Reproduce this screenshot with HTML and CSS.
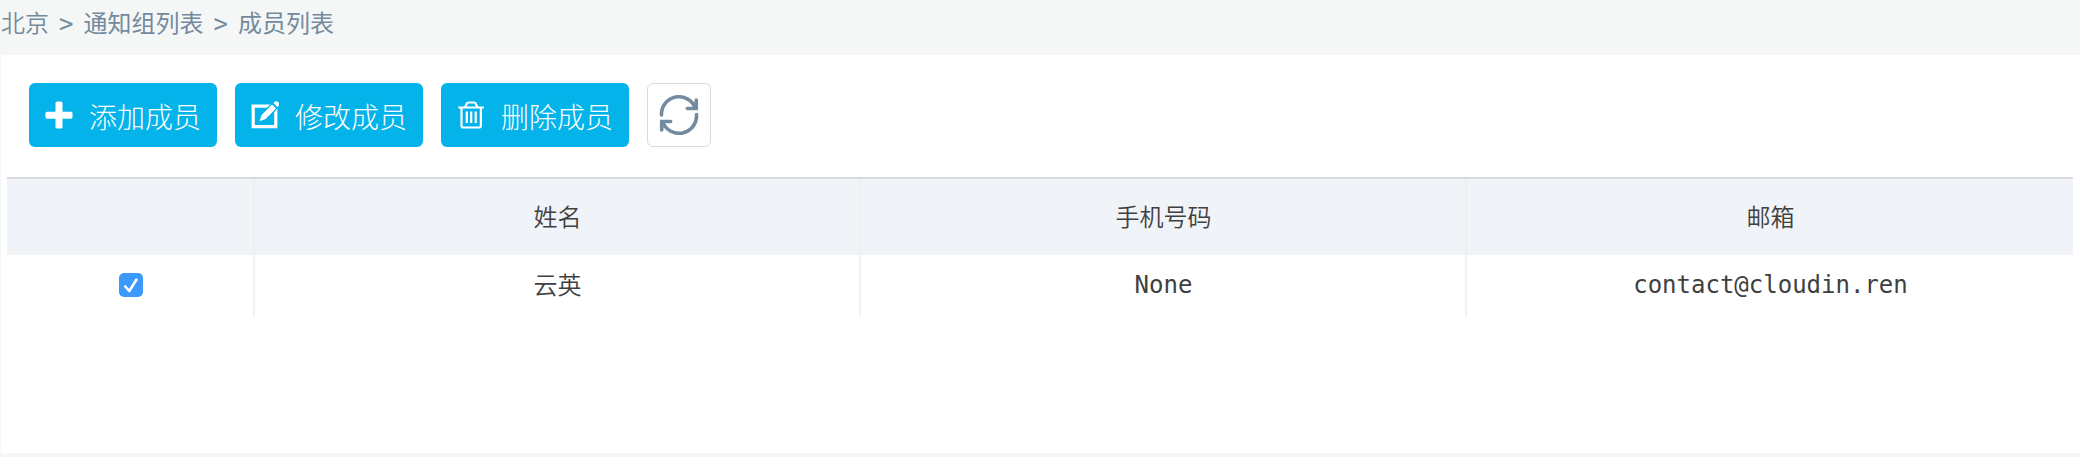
FILE: index.html
```html
<!DOCTYPE html>
<html lang="zh-CN">
<head>
<meta charset="utf-8">
<title>成员列表</title>
<link rel="stylesheet" href="styles.css">
</head>
<body>
<nav class="breadcrumb">
  <span class="crumb-root">北京</span>
  <span class="crumb-sep">&gt;</span>
  <span class="crumb">通知组列表</span>
  <span class="crumb-sep">&gt;</span>
  <span class="crumb">成员列表</span>
</nav>
<main class="panel">
  <div class="toolbar">
    <button class="btn">
      <svg class="icon" viewBox="0 0 28 28" fill="currentColor"><rect x="10.500" y="0.500" width="7" height="27" rx="1.600"/><rect x="0.500" y="10.700" width="27" height="7" rx="1.600"/></svg>
      <span class="label">添加成员</span>
    </button>
    <button class="btn">
      <svg class="icon" viewBox="0 0 28 28"><path d="M2.200 5.200h22.600v20.400H2.200z" fill="none" stroke="currentColor" stroke-width="3.200"/><g class="pencil"><path d="M8.600 20.200l2-6.300L21 3.500l4 4L14.600 18z"/><path d="M22.400 2.100l.9-.9a2.800 2.800 0 0 1 4 4l-.9.900z"/></g></svg>
      <span class="label">修改成员</span>
    </button>
    <button class="btn">
      <svg class="icon" viewBox="0 0 28 28" fill="none" stroke="currentColor" stroke-width="2.200"><path d="M1.300 6.500h25.500M8 6.500l1.700-3.800q.5-1.200 1.700-1.200h5.700q1.200 0 1.700 1.200l1.700 3.800M4.500 6.500v18q0 2 2 2h15.400q2 0 2-2v-18M9.800 10.500v11.500M14.200 10.500v11.500M18.700 10.500v11.500"/></svg>
      <span class="label">删除成员</span>
    </button>
    <button class="btn-refresh" aria-label="refresh">
      <svg class="icon-refresh" viewBox="0 0 40 40" fill="none" stroke="currentColor" stroke-width="3.600" stroke-linecap="round" stroke-linejoin="miter"><path d="M2.500 20A17.500 17.500 0 0 1 36.500 13.500M37.300 5v8.500h-9"/><path d="M37.500 19.500A17.500 17.500 0 0 1 3.500 26.500M2.700 35v-8.500h9"/></svg>
    </button>
  </div>
  <table class="members">
    <colgroup><col class="col-check"><col class="col-data"><col class="col-data"><col class="col-last"></colgroup>
    <thead>
      <tr><th></th><th>姓名</th><th>手机号码</th><th>邮箱</th></tr>
    </thead>
    <tbody>
      <tr>
        <td><span class="checkbox"><svg viewBox="0 0 24 24" fill="none" stroke="currentColor" stroke-width="2.600" stroke-linecap="round" stroke-linejoin="round"><path d="M6.300 13.500l4 4.500 7.200-11.500"/></svg></span></td>
        <td class="name">云英</td>
        <td class="latin">None</td>
        <td class="latin">contact@cloudin.ren</td>
      </tr>
    </tbody>
  </table>
</main>
</body>
</html>
```

FILE: styles.css
```css
* {
  box-sizing: border-box;
}

body {
  margin: 0;
  height: 457px;
  padding: 0 0 4px 1px;
  display: flex;
  flex-direction: column;
  background: #f5f7f7;
  color: #404040;
  font: 350 24px/32px "Noto Sans CJK SC", sans-serif;
}

.breadcrumb {
  display: flex;
  height: 55px;
  padding-top: 6px;
  color: #748a9f;
  white-space: nowrap;
}

.crumb-sep {
  width: 14px;
  padding-top: 2px;
  margin: 0 10.500px 0 10px;
  font-family: "DejaVu Sans Mono", monospace;
}

.crumb {
  font-weight: 400;
}

.panel {
  flex: 1;
  padding: 28px 6px 0;
  background: #fff;
}

.toolbar {
  display: flex;
  gap: 18px;
  padding-left: 22px;
  margin-bottom: 30px;
}

.btn {
  display: flex;
  align-items: center;
  width: 188px;
  height: 64px;
  padding: 0 0 0 16px;
  border: 0;
  border-radius: 6px;
  background: #05b3eb;
  color: #fff;
  font: 300 28px/40px "Noto Sans CJK SC", sans-serif;
}

.icon {
  width: 28px;
  height: 28px;
  flex: none;
}

.pencil {
  fill: currentColor;
  stroke: #05b3eb;
  stroke-width: 2.400;
  paint-order: stroke;
}

.label {
  padding-top: 1px;
  margin-left: 16px;
  white-space: nowrap;
}

.btn-refresh {
  display: flex;
  align-items: center;
  justify-content: center;
  width: 64px;
  height: 64px;
  padding: 0;
  border: 1px solid #d9dadc;
  border-radius: 6px;
  background: #fff;
  color: #748a9f;
}

.icon-refresh {
  width: 40px;
  height: 40px;
}

.members {
  width: 2066px;
  table-layout: fixed;
  border-collapse: separate;
  border-spacing: 0;
  border-top: 2px solid #d9dadc;
  text-align: center;
}

.col-check {
  width: 248px;
}

.col-data,
.col-last {
  width: 606px;
}

.members th,
.members td {
  padding: 0 0 0 1px;
  border-right: 2px solid #f2f2f3;
}

.members th {
  height: 76px;
  padding-top: 1px;
  border-right-color: #eeeeef;
  border-bottom: 4px solid #f2f3f5;
  background: #f0f3f8;
  font-weight: 350;
}

.members td {
  height: 62px;
  padding-bottom: 2px;
}

.members .name {
  padding-bottom: 4px;
}

.members .latin {
  font-family: "DejaVu Sans Mono", monospace;
}

.members th:last-child,
.members td:last-child {
  border-right: 0;
}

.checkbox {
  display: block;
  width: 24px;
  height: 24px;
  margin: 0 auto;
  border-radius: 5px;
  background: #3b99fc;
  color: #fff;
}

.checkbox svg {
  display: block;
}
```
